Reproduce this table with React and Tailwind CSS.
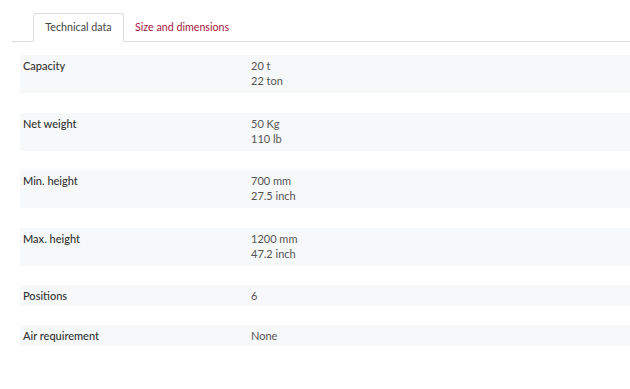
const rows = [
  { label: 'Capacity', values: ['20 t', '22 ton'] },
  { label: 'Net weight', values: ['50 Kg', '110 lb'] },
  { label: 'Min. height', values: ['700 mm', '27.5 inch'] },
  { label: 'Max. height', values: ['1200 mm', '47.2 inch'] },
  { label: 'Positions', values: ['6'] },
  { label: 'Air requirement', values: ['None'] },
];

export default function App() {
  return (
    <div className="w-[630px] h-[389px] bg-white font-['Lato','Open_Sans',sans-serif] pt-[13px] pl-[12px] overflow-hidden">
      {/* tabs */}
      <div className="flex items-end border-b border-[#dcdcdc] h-[29px] pl-[21px]">
        <div className="h-[29px] w-[91px] -mb-px border border-[#dcdcdc] border-b-white bg-white rounded-t-[3px] flex items-center justify-center text-[10.7px] text-[#444]">
          Technical data
        </div>
        <div className="h-[28px] flex items-center pl-[11px] text-[10.7px] text-[#a5173c]">
          Size and dimensions
        </div>
      </div>

      {/* spec rows */}
      <div className="ml-[8px] mt-[13px] flex flex-col gap-[19.5px]">
        {rows.map((r) => (
          <div
            key={r.label}
            className={
              'flex bg-[#f7f8f9] pt-[3px] pl-[3px] text-[11px] leading-[15px] ' +
              (r.values.length > 1 ? 'h-[38px]' : 'h-[20.5px]')
            }
          >
            <div className="w-[228px] text-[#333] font-medium">{r.label}</div>
            <div className="text-[#555]">
              {r.values.map((v) => (
                <div key={v}>{v}</div>
              ))}
            </div>
          </div>
        ))}
      </div>
    </div>
  );
}
